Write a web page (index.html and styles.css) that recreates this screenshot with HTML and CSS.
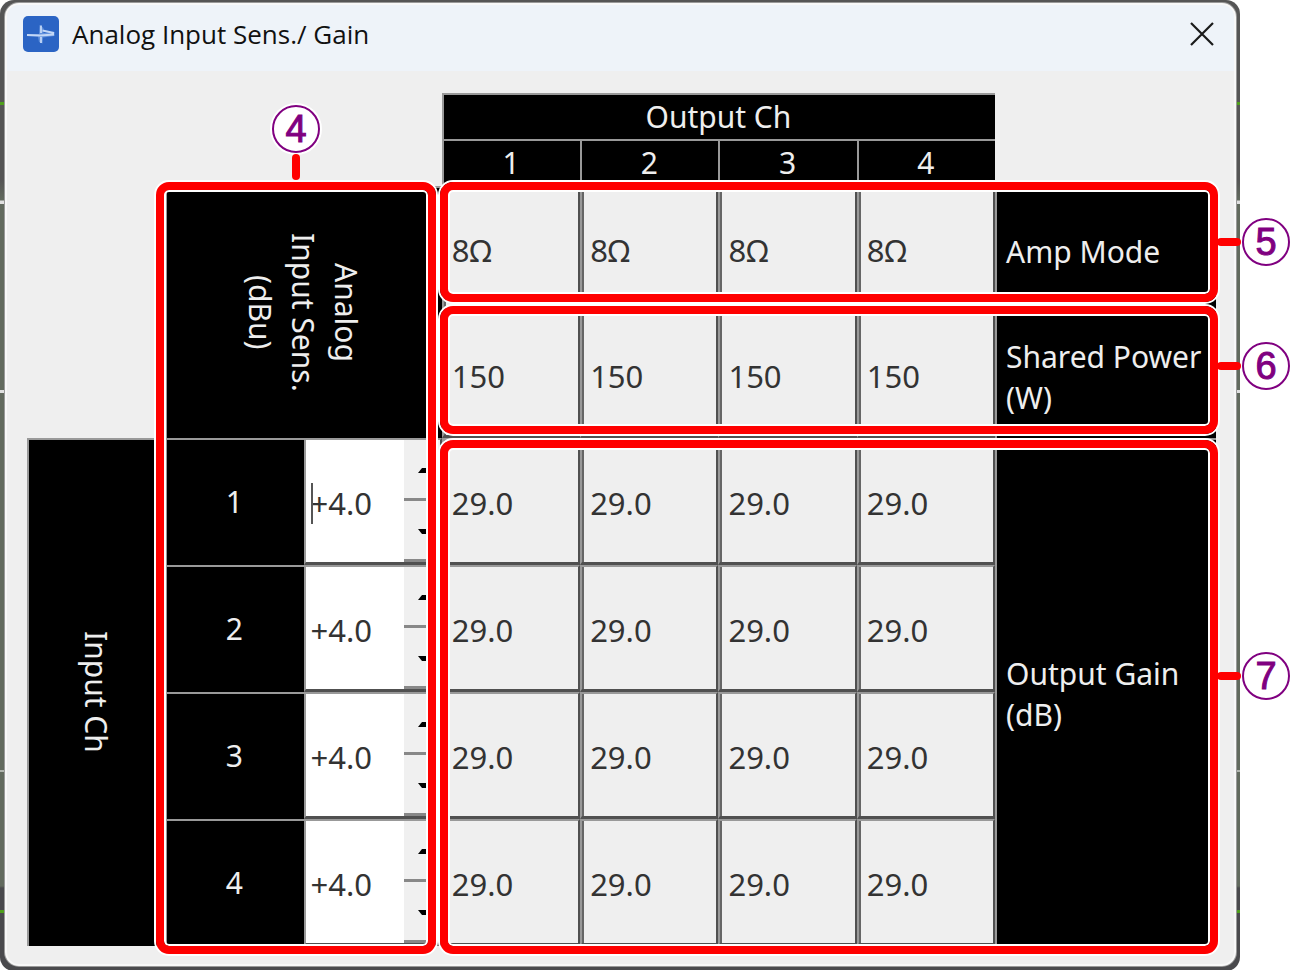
FILE: index.html
```
<!doctype html>
<html lang="en">
<head>
<meta charset="utf-8">
<title>Analog Input Sens./ Gain</title>
<link rel="stylesheet" href="styles.css">
</head>

<body>
<div class="frame">
<div class="window">
	<div class="titlebar">
		<svg class="logo" viewBox="0 0 36 36">
			<rect width="36" height="36" rx="5" fill="#2b64c4"/>
			<path d="M16.500 9L20.500 12V17L31.500 16V20L20 21.500L19.500 27.500L16 26L15 20.500L4 20V18.500L16 18Z" fill="#5f8fdc"/>
			<path d="M4 19L17 19.500L31 18.500M18 9.500V17M18 21V27M19.500 14.500L31 17" fill="none" stroke="#c3d7f6" stroke-width="1.800"/>
		</svg>
		<h1>Analog Input Sens./ Gain</h1>
		<button class="close" aria-label="Close"><svg viewBox="0 0 24 24"><path d="M1 1L23 23M23 1L1 23" stroke="#1a1a1a" stroke-width="2.200"/></svg></button>
	</div>

	<div class="content">
		<table class="gain">
			<colgroup>
				<col span="7">
				<col class="col-name">
			</colgroup>
			<tr class="r-title">
				<td class="none" colspan="3" rowspan="2"></td>
				<th colspan="4">Output Ch</th>
				<td class="none" rowspan="2"></td>
			</tr>
			<tr class="r-ch">
				<th>1</th><th>2</th><th>3</th><th>4</th>
			</tr>
			<tr class="r-mode">
				<td class="none" rowspan="2"></td>
				<th class="side" colspan="2" rowspan="2"><span>Analog<br>Input Sens.<br>(dBu)</span></th>
				<td>8Ω</td><td>8Ω</td><td>8Ω</td><td>8Ω</td>
				<th class="name">Amp Mode</th>
			</tr>
			<tr class="r-mode">
				<td>150</td><td>150</td><td>150</td><td>150</td>
				<th class="name">Shared Power (W)</th>
			</tr>
			<tr class="r-gain">
				<th class="side" rowspan="4"><span>Input Ch</span></th>
				<th id="in1">1</th>
				<td class="sens active"><div class="spin"><input type="text" value="+4.0" aria-labelledby="in1"><div class="steps"><button class="up" aria-label="Up"></button><button class="down" aria-label="Down"></button></div></div></td>
				<td>29.0</td><td>29.0</td><td>29.0</td><td>29.0</td>
				<th class="name" rowspan="4">Output Gain (dB)</th>
			</tr>
			<tr class="r-gain">
				<th id="in2">2</th>
				<td class="sens"><div class="spin"><input type="text" value="+4.0" aria-labelledby="in2"><div class="steps"><button class="up" aria-label="Up"></button><button class="down" aria-label="Down"></button></div></div></td>
				<td>29.0</td><td>29.0</td><td>29.0</td><td>29.0</td>
			</tr>
			<tr class="r-gain">
				<th id="in3">3</th>
				<td class="sens"><div class="spin"><input type="text" value="+4.0" aria-labelledby="in3"><div class="steps"><button class="up" aria-label="Up"></button><button class="down" aria-label="Down"></button></div></div></td>
				<td>29.0</td><td>29.0</td><td>29.0</td><td>29.0</td>
			</tr>
			<tr class="r-gain">
				<th id="in4">4</th>
				<td class="sens"><div class="spin"><input type="text" value="+4.0" aria-labelledby="in4"><div class="steps"><button class="up" aria-label="Up"></button><button class="down" aria-label="Down"></button></div></div></td>
				<td>29.0</td><td>29.0</td><td>29.0</td><td>29.0</td>
			</tr>
		</table>

		<!-- callouts, on the same columns and rows as the table -->
		<div class="marks">
			<div class="mark mark-sens"><b>4</b></div>
			<div class="mark mark-mode"><b>5</b></div>
			<div class="mark mark-power"><b>6</b></div>
			<div class="mark mark-gain"><b>7</b></div>
		</div>
	</div>
</div>
</div>
</body>
</html>
```
FILE: styles.css
```
*{ box-sizing:border-box; margin:0; padding:0;}
body{ background:#fff; font-family:"Noto Sans","Open Sans",sans-serif; font-size:30px; color:#333;}

/* window */
.frame{ margin-right:52px; padding:3px 4px 5px 5px; border-radius:14px;
	background:linear-gradient(#555 102px,#4fa01c 102px,#4fa01c 105px,#555 105px,#555 180px,#626a5e 200px,#e0e0e0 201px,#e0e0e0 204px,#626a5e 204px,#626a5e 390px,#e0e0e0 390px,#e0e0e0 393px,#626a5e 393px,#626a5e 770px,#b0b5ae 770px,#b0b5ae 772px,#626a5e 772px,#626a5e 886px,#4a4a4d 888px,#4a4a4d 910px,#4fa01c 910px,#4fa01c 913px,#4a4a4d 913px);}
.window{ background:#efefef; border:2px solid #f8f8f8; border-radius:14px; box-shadow:0 0 0 1px #999;}
.titlebar{ display:flex; align-items:center; height:66px; padding:0 20px 8px 16px; border-radius:12px 12px 0 0; background:#eef3f9;}
.logo{ width:36px; height:36px; margin-right:13px;}
.titlebar h1{ flex:1; font-family:"Open Sans","Noto Sans",sans-serif; font-size:26px; font-weight:400; color:#111;}
.close{ width:24px; height:24px; border:0; background:none;}
.close svg{ display:block; width:24px; height:24px;}
.content{ position:relative; margin:22px 18px 18px 20px;}

/* table */
.gain{ width:100%; table-layout:fixed; border-collapse:separate; border-spacing:0;}
.col-name{ width:221px;}
.r-title{ height:46px;}
.r-ch{ height:47px;}
.r-mode{ height:126px;}
.r-gain{ height:127px;}
th{ padding:0 2px 2px 0; background:#000; color:#eee; font-weight:400; line-height:41px; border-top:2px solid #999; border-left:2px solid #999;}
td{ padding:4px 0 0 8px; vertical-align:middle; font-size:31px; line-height:41px; border-top:2px solid #999; border-left:2px solid #999; border-right:2px solid #505050; border-bottom:3px solid #505050; box-shadow:inset 2px 0 #666;}
td.none{ border:0; box-shadow:none;}
th.name{ padding:2px 0 0 9px; text-align:left;}
th.side span{ display:inline-block; writing-mode:vertical-rl; line-height:43px; text-align:center; vertical-align:middle;}

/* spin box */
.sens{ position:relative; padding:0; background:#fff; box-shadow:none;}
.spin{ display:flex; height:122px;}
.spin input{ flex:1; min-width:0; padding:4px 0 0 5px; border:0; background:none; font:inherit; color:#333;}
.steps{ display:flex; flex-direction:column; width:36px; background:#f0f0f0;}
.steps button{ flex:1; padding:2px 0 0 14px; border:0; border-bottom:3px solid #888; background:none;}
.steps button:before{ content:""; display:block; width:8px; border:4px solid transparent; border-top:0; border-bottom:5px solid #000;}
.steps .down:before{ border-bottom:0; border-top:5px solid #000;}
.active:before{ content:""; position:absolute; left:5px; top:43px; width:2px; height:41px; background:#555;}

/* callouts */
.marks{ position:absolute; top:0; right:0; bottom:0; left:0; display:grid; grid-template-columns:repeat(7,1fr) 221px; grid-template-rows:46px 47px 126px 126px repeat(4,127px); pointer-events:none;}
.mark{ position:relative; border:8px solid #f00; border-radius:13px; box-shadow:0 0 0 2px #fff,inset 0 0 0 2px #fff;}
.mark-sens{ grid-area:3/2/9/4; margin:-4px 6px -8px -9px;}
.mark-mode{ grid-area:3/4/4/9; margin:-4px -2px 10px -2px;}
.mark-power{ grid-area:4/4/5/9; margin:-6px -2px 4px -2px;}
.mark-gain{ grid-area:5/4/9/9; margin:2px -2px -8px -2px;}
.mark b{ position:absolute; left:calc(100% + 32px); top:28px; width:48px; height:48px; border:2px solid #800080; border-radius:50%; background:#fff; box-shadow:0 0 0 2px #fff; font:400 38px/44px "Liberation Sans",Arial,sans-serif; -webkit-text-stroke:1px #800080; color:#800080; text-align:center;}
.mark b:before{ content:""; position:absolute; right:47px; top:18px; width:24px; height:8px; border-radius:4px; background:#f00;}
.mark-gain b{ top:204px;}
.mark-sens b{ left:calc(50% - 24px); top:-85px;}
.mark-sens b:before{ right:18px; top:47px; width:8px; height:26px;}
```
